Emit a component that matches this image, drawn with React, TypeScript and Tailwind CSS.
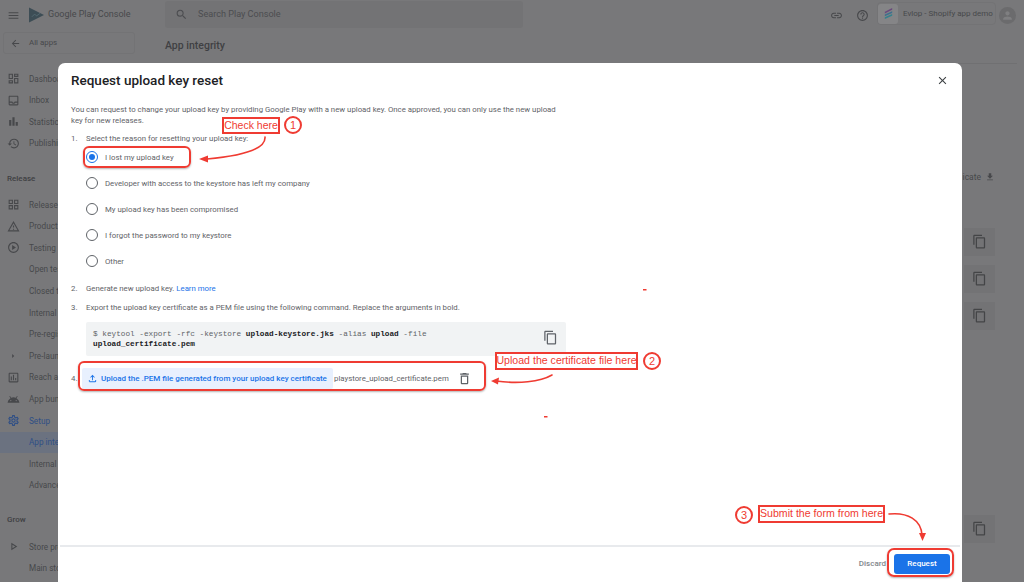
import type { ReactNode } from 'react';
import {
  MdMenu,
  MdArrowBack,
  MdSearch,
  MdLink,
  MdHelpOutline,
  MdPerson,
  MdClose,
  MdContentCopy,
  MdDeleteOutline,
  MdOutlineFileUpload,
  MdFileDownload,
  MdOutlineDashboard,
  MdOutlineInbox,
  MdBarChart,
  MdOutlineHistory,
  MdOutlineGridView,
  MdOutlineWarningAmber,
  MdOutlinePlayCircle,
  MdArrowRight,
  MdOutlineAssessment,
  MdOutlineAndroid,
  MdOutlineSettings,
  MdOutlinePlayArrow,
} from 'react-icons/md';

const RED = '#ef3b32';

type NavItem = {
  label: string;
  icon?: ReactNode;
  top: string;
  kind?: 'heading' | 'active' | 'setup';
};

const navItems: NavItem[] = [
  { label: 'Dashboard', icon: <MdOutlineDashboard />, top: 'mt-[14px]' },
  { label: 'Inbox', icon: <MdOutlineInbox />, top: 'mt-0' },
  { label: 'Statistics', icon: <MdBarChart />, top: 'mt-0' },
  { label: 'Publishing', icon: <MdOutlineHistory />, top: 'mt-0' },
  { label: 'Release', top: 'mt-[14px]', kind: 'heading' },
  { label: 'Releases', icon: <MdOutlineGridView />, top: 'mt-[4px]' },
  { label: 'Product', icon: <MdOutlineWarningAmber />, top: 'mt-0' },
  { label: 'Testing', icon: <MdOutlinePlayCircle />, top: 'mt-0' },
  { label: 'Open testing', top: 'mt-0' },
  { label: 'Closed testing', top: 'mt-0' },
  { label: 'Internal testing', top: 'mt-0' },
  { label: 'Pre-registration', top: 'mt-0' },
  { label: 'Pre-launch', icon: <MdArrowRight className="text-[10px]" />, top: 'mt-0' },
  { label: 'Reach and devices', icon: <MdOutlineAssessment />, top: 'mt-0' },
  { label: 'App bundle', icon: <MdOutlineAndroid />, top: 'mt-0' },
  { label: 'Setup', icon: <MdOutlineSettings />, top: 'mt-0', kind: 'setup' },
  { label: 'App integrity', top: 'mt-0', kind: 'active' },
  { label: 'Internal app', top: 'mt-0' },
  { label: 'Advanced', top: 'mt-0' },
  { label: 'Grow', top: 'mt-[13px]', kind: 'heading' },
  { label: 'Store presence', icon: <MdOutlinePlayArrow />, top: 'mt-[5px]' },
  { label: 'Main store', top: 'mt-0' },
];

function SideRow({ item }: { item: NavItem }) {
  if (item.kind === 'heading') {
    return (
      <div className={`${item.top} h-[21.6px] pl-[7px] flex items-center text-[8px] font-medium text-[#3f4043]`}>
        {item.label}
      </div>
    );
  }
  const color = item.kind === 'setup' || item.kind === 'active' ? 'text-[#2f4f86]' : 'text-[#47484b]';
  const bg = item.kind === 'active' ? 'bg-[#6b7280]' : '';
  return (
    <div className={`${item.top} ${color} ${bg} h-[21.6px] flex items-center text-[8.2px] whitespace-nowrap`}>
      <span className="w-[29px] pr-[3px] flex justify-center text-[13px] shrink-0">{item.icon}</span>
      <span>{item.label}</span>
    </div>
  );
}

function Radio({ label, checked }: { label: string; checked?: boolean }) {
  return (
    <div className="h-[26px] flex items-center pl-[15px] text-[7.8px] text-[#5f6368]">
      <span
        className={`w-[11.5px] h-[11.5px] rounded-full border flex items-center justify-center mr-[7.5px] ${
          checked ? 'border-[#1a73e8]' : 'border-[#5f6368]'
        }`}
      >
        {checked && <span className="w-[6px] h-[6px] rounded-full bg-[#1a73e8]" />}
      </span>
      <span>{label}</span>
    </div>
  );
}

function Step({ n, mt, children }: { n: string; mt: string; children: ReactNode }) {
  return (
    <div className={`${mt} flex h-[11px]`}>
      <span className="w-[15px] shrink-0">{n}</span>
      <span>{children}</span>
    </div>
  );
}

function CopyTile({ mt }: { mt: string }) {
  return (
    <div className={`${mt} w-[31px] h-[28px] bg-[#737375] flex items-center justify-center text-[15px] text-[#444547]`}>
      <MdContentCopy />
    </div>
  );
}

function Background() {
  return (
    <div className="h-[582px] bg-[#78787a] flex flex-col text-[#47484b]">
      <header className="h-[30px] flex items-center shrink-0">
        <MdMenu className="ml-[7px] text-[13px]" />
        <svg viewBox="0 0 16 16" className="ml-[9px] w-[15px] h-[16px]">
          <path d="M0 0 L16 8 L0 16 Z" fill="#3d4d55" />
          <path d="M3 10 L6 7 L8 9 L12 6" stroke="#5a7078" strokeWidth="0.8" fill="none" />
        </svg>
        <span className="ml-[4px] w-[117px] text-[9px] whitespace-nowrap">Google Play Console</span>
        <div className="h-[27px] w-[358px] -mt-[1px] bg-[#737375] rounded-[3px] flex items-center pl-[10px] text-[9.1px] text-[#4c4d50]">
          <MdSearch className="text-[13px] mr-[10px]" />
          <span>Search Play Console</span>
        </div>
        <div className="ml-auto flex items-center">
          <MdLink className="text-[13px]" />
          <MdHelpOutline className="ml-[13px] text-[13px]" />
          <div className="ml-[8px] w-[119px] h-[23px] -mt-[3px] border border-[#737375] rounded-[4px] flex items-center">
            <span className="w-[20px] h-[20px] rounded-[3px] bg-[#858587] flex items-center justify-center">
              <svg viewBox="0 0 12 14" className="w-[11px] h-[13px]">
                <path d="M2 5 L10 1 V3 L2 7 Z" fill="#6a4a7c" />
                <path d="M2 8 L10 4.5 V6.5 L2 10 Z" fill="#3e6f8e" />
                <path d="M2 11 L10 7.5 V9.5 L2 13 Z" fill="#35808c" />
              </svg>
            </span>
            <span className="ml-[5px] text-[8px] whitespace-nowrap">Evlop - Shopify app demo</span>
          </div>
          <span className="ml-[3px] mr-[8px] w-[17px] h-[17px] rounded-full bg-[#6b6b6d] flex items-center justify-center text-[#7f7f81] text-[13px]">
            <MdPerson />
          </span>
        </div>
      </header>
      <div className="flex flex-1 min-h-0">
        <aside className="w-[150px] shrink-0 pl-[3px]">
          <div className="h-[22px] w-[132px] mt-[2px] border border-[#737375] rounded-[3px] flex items-center text-[7.9px] pl-[6px]">
            <MdArrowBack className="text-[11px] mr-[8px]" />
            <span>All apps</span>
          </div>
          {navItems.map((item) => (
            <div key={item.label} className="-ml-[3px]">
              <SideRow item={item} />
            </div>
          ))}
        </aside>
        <main className="flex-1 pl-[15px] flex flex-col">
          <h2 className="mt-[8px] text-[10.5px] font-medium text-[#3f4043]">App integrity</h2>
          <div className="mt-[9px] mr-[7px] border-t border-[#707072]" />
          <div className="mt-[107px] mr-[29px] flex flex-col items-end">
            <div className="flex items-center text-[8.5px]">
              <span>icate</span>
              <MdFileDownload className="ml-[4px] text-[10px]" />
            </div>
            <CopyTile mt="mt-[44px]" />
            <CopyTile mt="mt-[9px]" />
            <CopyTile mt="mt-[9px]" />
            <CopyTile mt="mt-[185px]" />
          </div>
        </main>
      </div>
    </div>
  );
}

function Dialog() {
  return (
    <div className="absolute left-[58px] top-[63px] w-[904px] h-[519px] bg-white rounded-t-[7px] flex flex-col">
      <div className="h-[34px] pl-[13px] pr-[13px] flex items-center justify-between shrink-0">
        <h1 className="text-[13.5px] font-medium text-[#202124]">Request upload key reset</h1>
        <MdClose className="text-[13px] text-[#3c4043]" />
      </div>
      <div className="flex-1 pl-[13px] pt-[7px] text-[7.8px] text-[#5f6368] leading-[11px]">
        <p className="w-[490px]">
          You can request to change your upload key by providing Google Play with a new upload key. Once approved, you can only use the new upload key for new releases.
        </p>
        <Step n="1." mt="mt-[7px]">Select the reason for resetting your upload key:</Step>
        <div>
          <Radio label="I lost my upload key" checked />
          <Radio label="Developer with access to the keystore has left my company" />
          <Radio label="My upload key has been compromised" />
          <Radio label="I forgot the password to my keystore" />
          <Radio label="Other" />
        </div>
        <Step n="2." mt="mt-[9px]">
          Generate new upload key. <span className="text-[#1a73e8]">Learn more</span>
        </Step>
        <Step n="3." mt="mt-[8px]">
          Export the upload key certificate as a PEM file using the following command. Replace the arguments in bold.
        </Step>
        <div className="mt-[9px] ml-[15px] w-[480px] h-[34px] bg-[#f1f3f4] rounded-[2px] flex items-center pl-[7px] pr-[8px]">
          <code className="block w-[420px] font-['Liberation_Mono',monospace] text-[7.72px] leading-[10.5px] text-[#5f6368]">
            $ keytool -export -rfc -keystore <b className="text-[#202124]">upload-keystore.jks</b> -alias <b className="text-[#202124]">upload</b> -file{' '}
            <b className="text-[#202124]">upload_certificate.pem</b>
          </code>
          <MdContentCopy className="ml-auto mb-[4px] text-[15px] text-[#5f6368]" />
        </div>
        <div className="mt-[12px] flex items-center h-[21px]">
          <span className="w-[11px] shrink-0">4.</span>
          <div className="h-[21px] w-[251px] shrink-0 bg-[#e8f0fe] rounded-[2px] flex items-center pl-[5px] text-[8px] font-medium text-[#1a73e8] whitespace-nowrap">
            <MdOutlineFileUpload className="text-[11px] mr-[3px] shrink-0" />
            <span>Upload the .PEM file generated from your upload key certificate</span>
          </div>
          <span className="ml-[1px] text-[#5f6368]">playstore_upload_certificate.pem</span>
          <MdDeleteOutline className="ml-[8px] text-[15px] text-[#5f6368]" />
        </div>
      </div>
      <div className="h-[37px] mx-[2px] pb-[2px] border-t-2 border-[#e8eaed] flex items-center justify-end pr-[10px] shrink-0">
        <span className="text-[8px] font-medium text-[#80868b] mr-[8px]">Discard</span>
        <button className="w-[56px] h-[20px] rounded-[3px] bg-[#1a73e8] text-[8px] font-medium text-white">
          Request
        </button>
      </div>
    </div>
  );
}

function Label({ className, children }: { className: string; children: ReactNode }) {
  return (
    <div
      className={`absolute flex items-center justify-center border-2 border-[#ef3b32] bg-white font-['Liberation_Sans',sans-serif] text-[#ef3b32] whitespace-nowrap ${className}`}
    >
      {children}
    </div>
  );
}

function Num({ className, children }: { className: string; children: ReactNode }) {
  return (
    <div
      className={`absolute w-[18px] h-[18px] rounded-full border-2 border-[#ef3b32] bg-white flex items-center justify-center font-['Liberation_Sans',sans-serif] text-[11px] text-[#ef3b32] ${className}`}
    >
      {children}
    </div>
  );
}

function Annotations() {
  return (
    <>
      <Label className="left-[222px] top-[117px] w-[58px] h-[17px] text-[10.5px]">Check here</Label>
      <Num className="left-[284px] top-[116px]">1</Num>
      <div className="absolute left-[83px] top-[146px] w-[108px] h-[22px] rounded-[6px] border-2 border-[#ef3b32] shadow-[0_1px_2px_rgba(0,0,0,0.3)]" />

      <Label className="left-[495px] top-[352px] w-[143px] h-[18px] text-[10.6px]">Upload the certificate file here</Label>
      <Num className="left-[643px] top-[352px]">2</Num>
      <div className="absolute left-[78px] top-[361px] w-[408px] h-[30px] rounded-[6px] border-2 border-[#ef3b32] shadow-[0_1px_2px_rgba(0,0,0,0.3)]" />

      <Label className="left-[758px] top-[505px] w-[127px] h-[18px] text-[10.6px]">Submit the form from here</Label>
      <Num className="left-[735px] top-[506px]">3</Num>
      <div className="absolute left-[887px] top-[548px] w-[67px] h-[29px] rounded-[7px] border-2 border-[#ef3b32] shadow-[0_1px_2px_rgba(0,0,0,0.3)]" />

      <svg viewBox="0 0 1024 582" className="absolute left-0 top-0 w-[1024px] h-[582px] pointer-events-none">
        <g fill="none" stroke={RED} strokeWidth="1.6" strokeLinecap="round">
          <path d="M265 137 C266 150 240 156 207 159" />
          <path d="M552 375 C540 382 518 384 496 381" />
          <path d="M889 514 C908 512 921 520 922 535" />
        </g>
        <g fill={RED}>
          <path d="M199 159 L208 155.5 L208 162.5 Z" />
          <path d="M491 381 L499 377.5 L498 384.5 Z" />
          <path d="M922.5 541 L919 533 L926 533 Z" />
          <rect x="643" y="289" width="3.5" height="1.5" />
          <rect x="544" y="416" width="3.5" height="1.5" />
        </g>
      </svg>
    </>
  );
}

export default function App() {
  return (
    <div className="relative w-[1024px] h-[582px] overflow-hidden font-['Roboto',sans-serif]">
      <Background />
      <Dialog />
      <Annotations />
    </div>
  );
}
